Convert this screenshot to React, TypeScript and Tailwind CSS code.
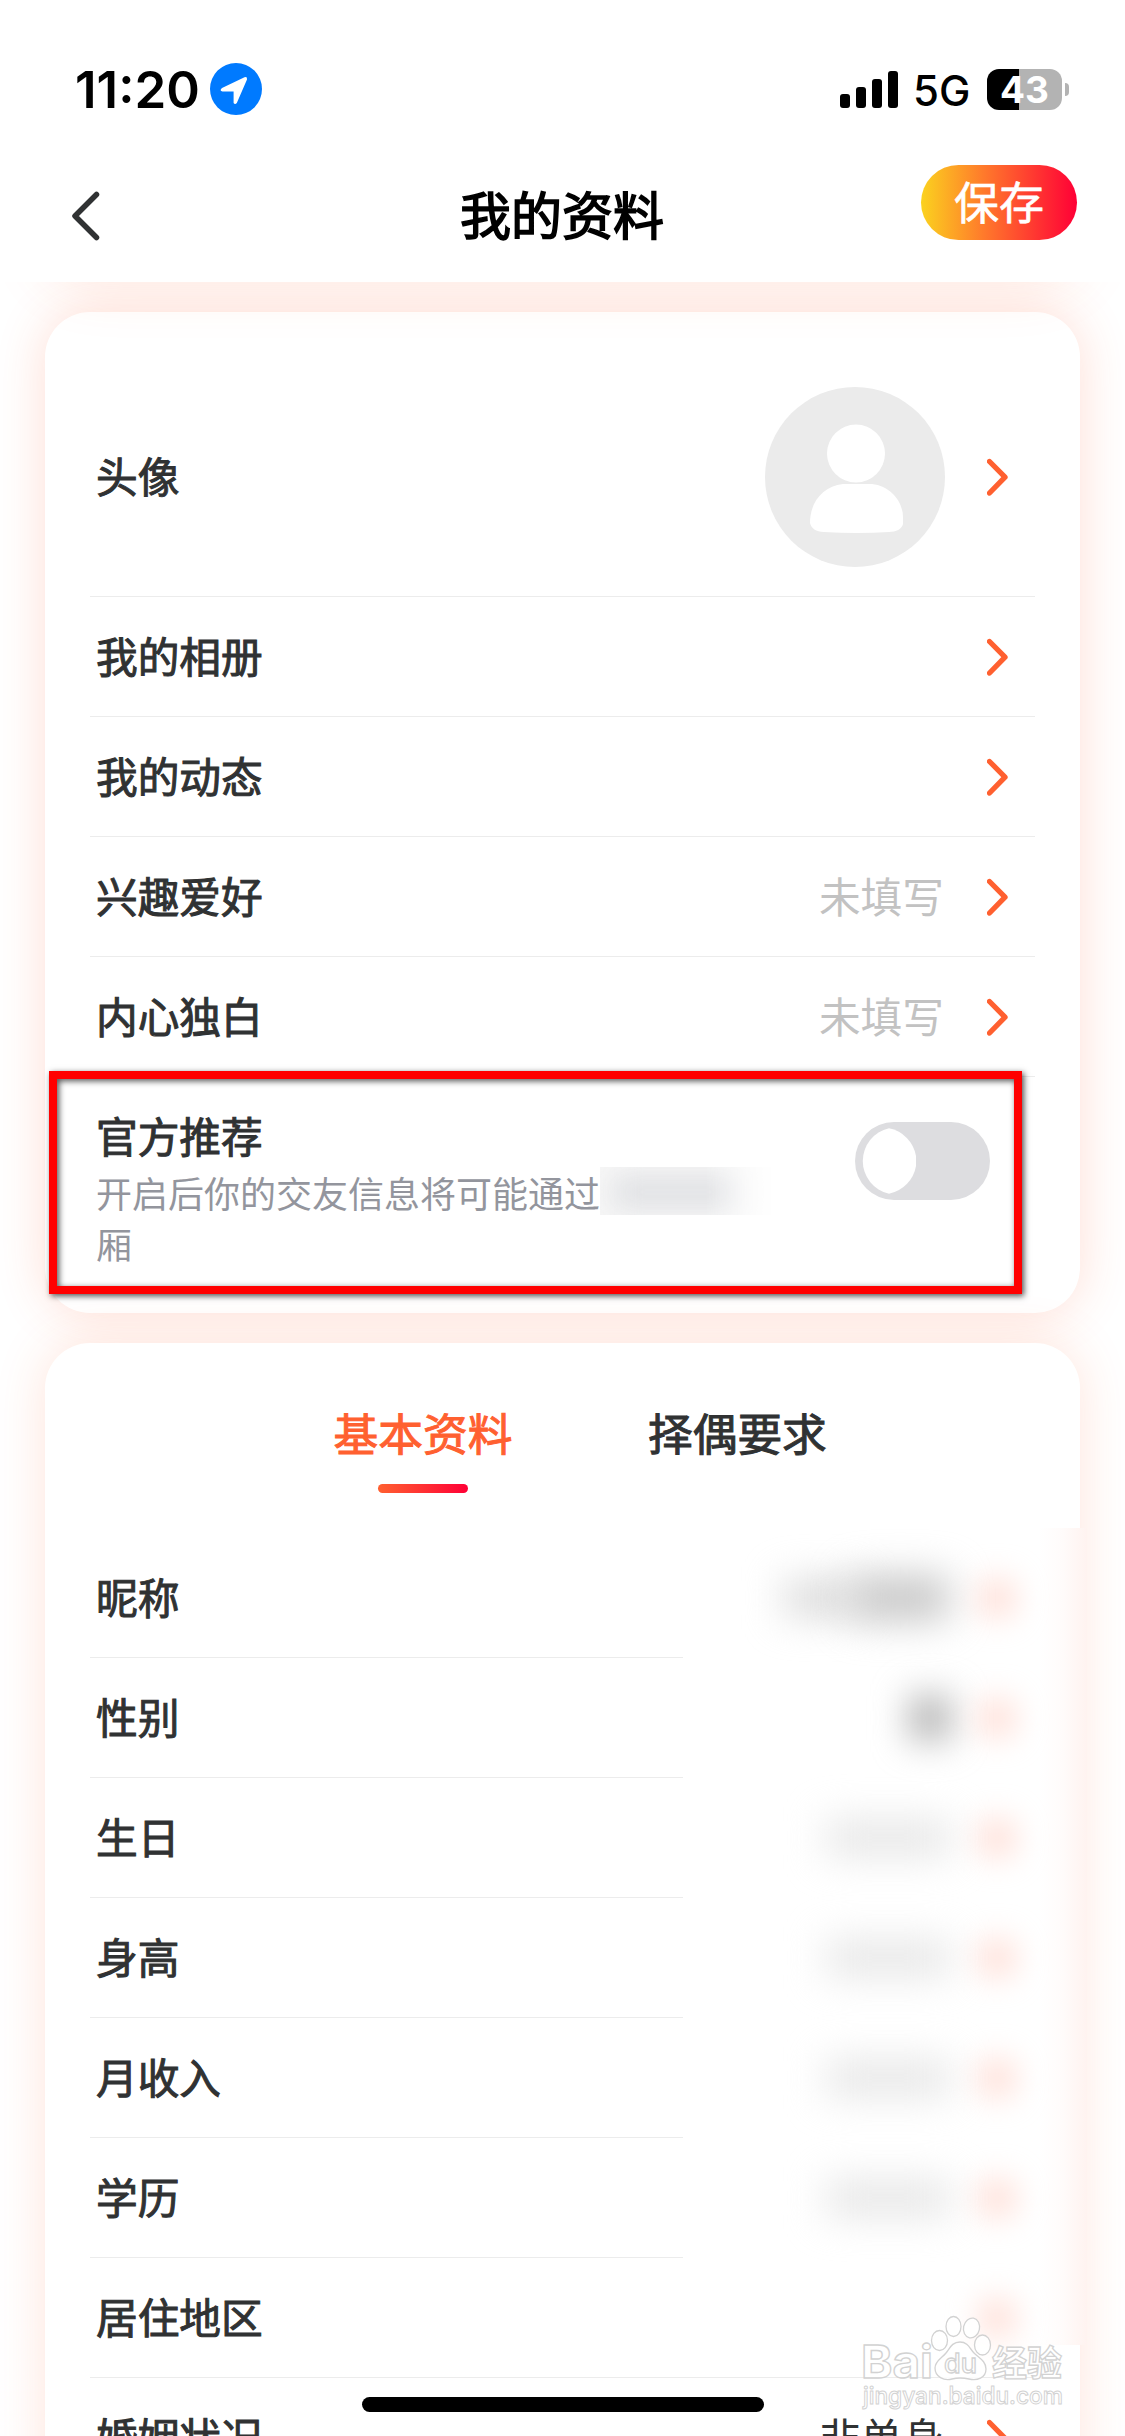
import React from "react";
import clsx from "clsx";

interface MenuItem {
  label: string;
  value?: string;
}

interface ProfileField {
  label: string;
  value?: string;
  masked?: "name" | "gender" | "empty" | "none";
}

const menuItems: MenuItem[] = [
  { label: "我的相册" },
  { label: "我的动态" },
  { label: "兴趣爱好", value: "未填写" },
  { label: "内心独白", value: "未填写" },
];

const profileFields: ProfileField[] = [
  { label: "昵称", masked: "name" },
  { label: "性别", masked: "gender" },
  { label: "生日", masked: "empty" },
  { label: "身高", masked: "empty" },
  { label: "月收入", masked: "empty" },
  { label: "学历", masked: "empty" },
  { label: "居住地区", masked: "none" },
  { label: "婚姻状况", value: "非单身" },
];

const labelClass = "pb-[3px] text-[41.7px] [-webkit-text-stroke:1px_currentColor]";

const Chevron: React.FC = () => (
  <svg width="21" height="38" viewBox="0 0 21 38" fill="none" className="shrink-0">
    <path
      d="M2.5 3.5 18 19.200 2.5 35"
      stroke="#ff6030"
      strokeWidth="5.3"
      strokeLinecap="round"
      strokeLinejoin="round"
    />
  </svg>
);

const StatusBar: React.FC = () => (
  <div className="flex h-[135px] items-center justify-between pt-[43px] pr-[56px] pl-[75px] font-['Inter',sans-serif]">
    <div className="flex items-center">
      <span className="w-[135px] text-[51px] leading-none font-semibold text-black">11:20</span>
      <svg width="52" height="52" viewBox="0 0 52 52">
        <circle cx="26" cy="26" r="26" fill="#007aff" />
        <path
          d="M12 25 34.5 14.2Q37.5 13.5 37 16.5L26.8 40Q25 42 23.6 40V28.5H12.5Q9 27.5 12 25Z"
          fill="#fff"
        />
      </svg>
    </div>
    <div className="flex items-center">
      <svg width="58" height="37" viewBox="0 0 58 37" fill="#000">
        <rect x="0" y="23" width="10" height="14" rx="3" />
        <rect x="16" y="16" width="10" height="21" rx="3" />
        <rect x="32" y="8" width="10" height="29" rx="3" />
        <rect x="48" y="0" width="10" height="37" rx="3" />
      </svg>
      <span className="mt-[3px] ml-[15px] w-[74px] text-[42px] leading-none font-medium text-black">
        5G
      </span>
      <div className="flex h-[41px] w-[75px] items-center justify-center rounded-[12px] bg-[linear-gradient(90deg,#000_43%,#b3b3b3_43%)] text-[37px] leading-none font-bold text-white">
        43
      </div>
      <div className="ml-[3px] h-[13px] w-[4px] rounded-r-full bg-[#b3b3b3]" />
    </div>
  </div>
);

const NavBar: React.FC = () => (
  <header className="grid h-[147px] grid-cols-3 pr-12 pl-[69px]">
    <div className="pt-[55px]">
      <svg width="32" height="52" viewBox="0 0 32 52" fill="none">
        <path
          d="M27.5 4.5 6 26 27.5 47.5"
          stroke="#303233"
          strokeWidth="5.5"
          strokeLinecap="round"
          strokeLinejoin="round"
        />
      </svg>
    </div>
    <h1 className="-ml-[22px] pt-[40px] text-center text-[51px] leading-[76px] text-black [-webkit-text-stroke:1.6px_currentColor]">
      我的资料
    </h1>
    <button className="mt-[30px] flex h-[75px] w-[156px] items-center justify-center justify-self-end rounded-full bg-[linear-gradient(90deg,#fbd21f,#ff7a2b_40%,#ff0036)] pb-1 text-[45px] leading-none text-white [-webkit-text-stroke:0.6px_currentColor]">
      保存
    </button>
  </header>
);

const Avatar: React.FC = () => (
  <svg width="180" height="180" viewBox="0 0 180 180" className="mr-[42px]">
    <circle cx="90" cy="90" r="90" fill="#ebebeb" />
    <circle cx="91" cy="66.5" r="29" fill="#fff" />
    <path
      d="M78 97H107C126 99 138 115 138 130V137C137 142 131 145 124 145Q92 147 59 145C51 145 46 141 45 136C45 115 58 99 78 97Z"
      fill="#fff"
    />
  </svg>
);

const Toggle: React.FC = () => (
  <svg width="135" height="78" viewBox="0 0 135 78">
    <rect width="135" height="78" rx="39" fill="#dddde0" />
    <path d="M34 6.300A33.500 33.500 0 0 0 34 71.700A34 34 0 0 0 61 44V34A34 34 0 0 0 34 6.300Z" fill="#fff" />
  </svg>
);

// blurred blobs that hide the personal values
const MaskedValue: React.FC<{ kind: ProfileField["masked"] }> = ({ kind }) => (
  <div className="flex items-center justify-end">
    {kind === "name" && (
      <>
        <div className="h-[36px] w-[74px] bg-[#dadada] blur-[19px]" />
        <div className="-ml-2 h-[46px] w-[100px] rounded-xl bg-[#c8c8c8] blur-[19px]" />
      </>
    )}
    {kind === "gender" && <div className="h-[44px] w-[40px] bg-[#adadad] blur-[18px]" />}
    {kind === "empty" && <div className="h-[36px] w-[124px] bg-[#e6e6e6] blur-[19px]" />}
    <div className="-mr-[5px] ml-[31px] h-[38px] w-[32px] rounded-full bg-[#ffd6cc] blur-[16px]" />
  </div>
);

const Watermark: React.FC = () => (
  <svg
    width="212"
    height="106"
    viewBox="0 0 212 106"
    className="absolute top-[2310px] left-[858px]"
    fill="#fff"
    fillOpacity="0.85"
    stroke="#d2d2d2"
    strokeWidth="1.3"
    fontFamily="Inter, 'Noto Sans CJK SC', sans-serif"
  >
    <text x="3" y="68" fontSize="45" fontWeight="700" textLength="72" lengthAdjust="spacingAndGlyphs">
      Bai
    </text>
    <ellipse cx="81.500" cy="30.500" rx="8" ry="10" />
    <ellipse cx="95.500" cy="16.500" rx="7.500" ry="10" />
    <ellipse cx="113.500" cy="18" rx="8" ry="10" transform="rotate(12 113.500 18)" />
    <ellipse cx="124.500" cy="35" rx="8" ry="10" />
    <path d="M102 32C110 32 112 39 116 43C121 48 128 51 128 59C128 68 119 71 111 69Q102 67 94 69C86 71 77 67 77 58C77 51 84 48 88 43C92 38 94 32 102 32Z" />
    <text x="86" y="63" fontSize="27" fontWeight="500" textLength="33">
      du
    </text>
    <text x="134" y="66" fontSize="35" fontWeight="700" textLength="70">
      经验
    </text>
    <text x="5" y="94" fontSize="24" fontWeight="500" strokeWidth="1" textLength="200" lengthAdjust="spacingAndGlyphs">
      jingyan.baidu.com
    </text>
  </svg>
);

const App: React.FC = () => {
  return (
    <div className="relative h-[2436px] w-[1125px] overflow-hidden bg-white font-['Noto_Sans_CJK_SC',sans-serif] text-[#303233]">
      <StatusBar />
      <NavBar />

      <main className="relative flex h-[2154px] flex-col gap-[30px] overflow-hidden px-[45px] pt-[30px]">
        {/* glow that falls from under the nav bar */}
        <div className="absolute inset-x-[45px] -top-[100px] z-10 h-[100px] rounded-[45px] shadow-[0_0_60px_#ff5c2b26]" />

        <section className="relative h-[1001px] shrink-0 rounded-[45px] bg-white px-[45px] pt-[45px] shadow-[0_0_50px_#ff5c2b33]">
          <div className="flex h-60 items-center border-b border-[#ececec] pr-[27px] pl-[6px]">
            <span className={clsx("flex-1", labelClass)}>头像</span>
            <Avatar />
            <Chevron />
          </div>
          {menuItems.map((item) => (
            <div
              key={item.label}
              className="flex h-[120px] items-center border-b border-[#ececec] pr-[27px] pl-[6px]"
            >
              <span className={clsx("flex-1", labelClass)}>{item.label}</span>
              <span className="mr-[43px] pb-[3px] text-[41.7px] text-[#c2c2c2]">{item.value}</span>
              <Chevron />
            </div>
          ))}
          <div className="flex justify-between pr-[45px] pl-[6px]">
            <div className="pt-[27px]">
              <h2 className="text-[41.7px] leading-[63px] [-webkit-text-stroke:1px_currentColor]">官方推荐</h2>
              <p className="flex h-[51px] text-[36px] leading-[51px] text-[#93959d]">
                开启后你的交友信息将可能通过
                <span className="h-12 w-[175px] overflow-hidden bg-[#f7f7f7] [mask-image:linear-gradient(90deg,#000_60%,transparent)]">
                  <span className="mt-2 ml-3 block h-[34px] w-[128px] bg-[#e0e1e4] blur-[14px]" />
                </span>
              </p>
              <p className="text-[36px] leading-[51px] text-[#93959d]">厢</p>
            </div>
            <div className="pt-[45px]">
              <Toggle />
            </div>
          </div>
          {/* highlight frame over the recommend row */}
          <div className="absolute top-[759px] left-[4px] h-[223px] w-[973px] border-8 border-[#ff0000] shadow-[2px_2px_6px_#000000b0,inset_2px_2px_6px_#000000b0]" />
        </section>

        <section className="relative h-[1200px] shrink-0 rounded-[45px] bg-white px-[45px] shadow-[0_0_50px_#ff5c2b2b]">
          {/* soft right edge next to the masked values */}
          <div className="absolute top-[185px] -right-[7px] h-[817px] w-[48px] bg-[linear-gradient(90deg,#ffffff,#fffbfa_50%,#fff3f0)]" />
          <div className="flex h-[195px] gap-[135px] pt-[58px] pl-[243px]">
            <div className="flex w-[180px] flex-col items-center">
              <span className="text-[44.7px] leading-[62px] text-[#ff6030] [-webkit-text-stroke:1px_currentColor]">
                基本资料
              </span>
              <div className="mt-[21px] h-[9px] w-[90px] rounded-full bg-[linear-gradient(90deg,#ff6030,#ff0036)]" />
            </div>
            <span className="w-[180px] text-[44.7px] leading-[62px] [-webkit-text-stroke:1px_currentColor]">
              择偶要求
            </span>
          </div>
          {profileFields.map((field) => (
            <div key={field.label} className="relative flex">
              <div
                className={clsx(
                  "flex h-[120px] items-center border-b border-[#ececec] pl-[6px]",
                  field.masked && field.masked !== "none" ? "w-[593px]" : "w-[945px] pr-[27px]",
                )}
              >
                <span className={labelClass}>{field.label}</span>
                {field.value && (
                  <>
                    <span className="mr-[43px] ml-auto pb-[3px] text-[41.7px]">{field.value}</span>
                    <Chevron />
                  </>
                )}
                {field.masked === "none" && (
                  <div className="ml-auto">
                    <MaskedValue kind="none" />
                  </div>
                )}
              </div>
              {field.masked && field.masked !== "none" && (
                <div className="flex w-[325px] items-center justify-end">
                  <MaskedValue kind={field.masked} />
                </div>
              )}
            </div>
          ))}
        </section>
      </main>

      <Watermark />
      <div className="absolute top-[2397px] left-[362px] h-[15px] w-[402px] rounded-full bg-black" />
    </div>
  );
};

export default App;
